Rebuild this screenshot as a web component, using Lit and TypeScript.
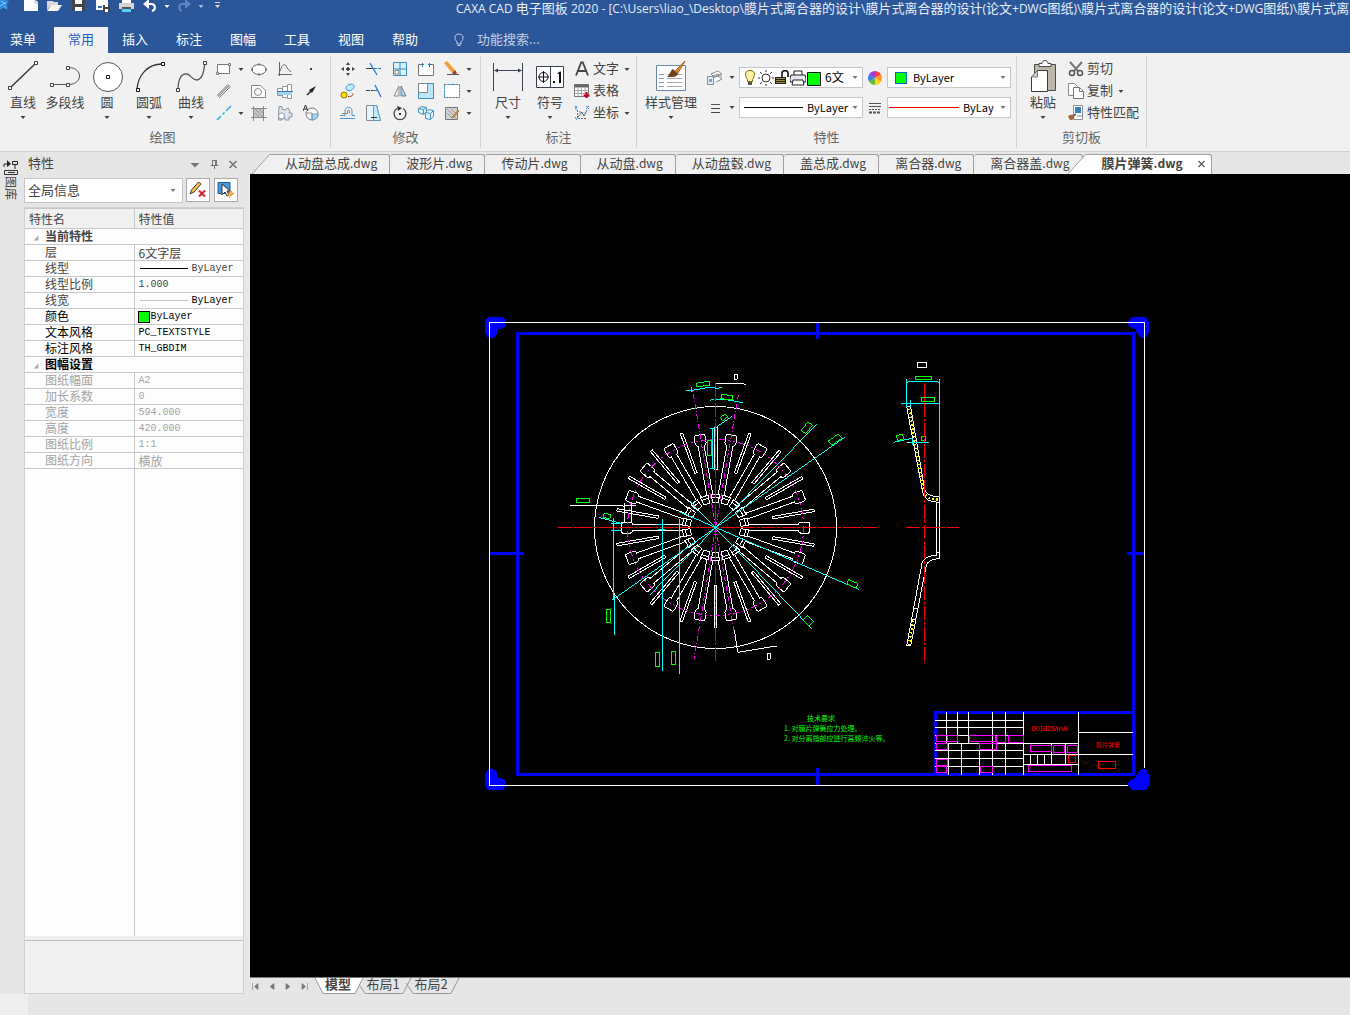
import { LitElement, html, svg, css, nothing, TemplateResult } from "lit";
import { customElement, property } from "lit/decorators.js";
import { classMap } from "lit/directives/class-map.js";

const base = css`
  :host {
    display: block;
    font-family: "Noto Sans CJK SC", sans-serif;
    font-size: 13px;
    line-height: 16px;
    color: #444;
  }
  * { box-sizing: border-box; }
  svg { display: block; flex: none; }
  button, select, input {
    font: inherit;
    color: inherit;
    border: 0;
    background: none;
    padding: 0;
    margin: 0;
    border-radius: 0;
  }
  select { appearance: none; outline: none; }
`;

const caret = (fill = "#444") => svg`<svg width="6" height="5" viewBox="0 0 6 5"><path d="M.5 1h5L3 4z" fill=${fill}/></svg>`;

/* 32 x 32 glyphs of the large ribbon buttons */
const large: Record<string, TemplateResult> = {
  line: svg`<path d="M3 28L29 3" stroke="#3b3f4c" stroke-width="1.600"/><g fill="#fff" stroke="#3b3f4c"><path d="M1.500 26.500h3v3h-3zM27.500 1.500h3v3h-3z"/></g>`,
  polyline: svg`<path d="M3 24.500H20C34 24 34 8 20 7.500h-2" fill="none" stroke="#555"/><g fill="#fff" stroke="#3b3f4c"><path d="M1.500 23.500h3v3h-3zM17.500 23.500h3v3h-3zM17.500 6.500h3v3h-3z"/></g>`,
  circle: svg`<circle cx="17" cy="17" r="14.500" fill="#fff" stroke="#555"/><path d="M15.500 15.500h3v3h-3z" fill="#fff" stroke="#222"/>`,
  arc: svg`<path d="M4 29C5 16 14 4 29 4" fill="none" stroke="#333" stroke-width="1.300"/><g fill="#fff" stroke="#111"><path d="M3.500 28.500h3v3h-3zM28.500 2.500h3v3h-3z"/></g>`,
  curve: svg`<path d="M3 30C3 18 7 13 12 14c4 1 5 6 10 6 6-1 7-10 8-18" fill="none" stroke="#555" stroke-width="1.300"/><g fill="#fff" stroke="#3b3f4c"><path d="M1.500 28.500h3v3h-3zM28.500 1.500h3v3h-3z"/></g>`,
  dimension: svg`<path d="M1.500 3v28M30.500 3v28" stroke="#3b4250"/><path d="M3 10.500h26" stroke="#3b4250"/><path d="M2 10.500l4-2v4zM30 10.500l-4-2v4z" fill="#3b4250"/>`,
  symbol: svg`<path d="M2.500 6.500h27v21h-27zM16.500 6.500v21" fill="#fff" stroke="#3b4250"/><circle cx="9.500" cy="17" r="4.500" fill="none" stroke="#111"/><path d="M9.500 11v12M4 17h11" stroke="#111"/><path d="M19 21h2v2h-2zM23 13.500l3-2h1V23h-2V14z" fill="#111"/>`,
  style: svg`<path d="M1.500 5.500h29v25h-29z" fill="#fff" stroke="#6f87a6"/><g stroke="#7f96b5"><path d="M4 14.500h5M4 18.500h5M4 22.500h5M4 26.500h5"/><path d="M12 14.500h15M12 18.500h15M12 22.500h15M12 26.500h15" stroke="#a9a9a9"/></g><path d="M30 1l-11 11 3 3z" fill="#dd8c2c" stroke="#8e5414" stroke-width=".8"/><path d="M18 9l5 5c-2 4-6 3-11 3 3-2 3-6 6-8z" fill="#6b4321"/>`,
  paste: svg`<path d="M7.500 4.500h21v26h-21z" fill="#beb6ab" stroke="#4a4a4a"/><path d="M12 6.500v-3h3c0-4 6-4 6 0h3v3z" fill="#fff" stroke="#4a4a4a"/><path d="M4.500 17l6-6.500h10v21H4.500z" fill="#fff" stroke="#3a3a3a"/><path d="M4.500 17h6v-6" fill="#c8ccd4" stroke="#777"/>`,
};

/* 16 x 16 glyphs */
const small: Record<string, TemplateResult> = {
  rect: svg`<path d="M1.500 3.500h12v9h-12z" fill="#fff" stroke="#777"/><path d="M.5 11.500h2v2h-2zM12.500 2.500h2v2h-2z" fill="#fff" stroke="#777"/>`,
  parallel: svg`<path d="M1 12.500L12 1.500M3 15L14.500 3.500" stroke="#777"/><path d="M2 13.500L13.500 2" stroke="#555"/>`,
  ray: svg`<path d="M1 15l4-4m1.500-1.500l2-2M10 6l5-5" stroke="#29a9dd" stroke-width="1.400"/>`,
  ellipse: svg`<ellipse cx="8" cy="8.500" rx="7" ry="5" fill="#fff" stroke="#666"/><path d="M0 7.500h2v2H0zM14 7.500h2v2h-2zM7 2.500h2v2H7zM7 12.500h2v2H7z" fill="#777"/>`,
  plate: svg`<path d="M.5 2.500h9l5 5v7H.5z" fill="#fff" stroke="#888"/><circle cx="7" cy="9" r="3.500" fill="#fff" stroke="#888"/>`,
  hatch: svg`<path d="M3 3h10v10H3z" fill="#bfc5c9"/><path d="M0 3.500h16M0 12.500h16M2.500 1v15M12.500 1v15" stroke="#888"/><path d="M4 4l8 8M4 8l4 4M8 4l4 4" stroke="#999"/>`,
  axis: svg`<path d="M2.500 1v14M1 13.500h14" stroke="#666"/><path d="M3 10C6 1 9 3 10 7l4 4" fill="none" stroke="#666"/>`,
  shaft: svg`<path d="M.5 5.500h5v7h-5zM5.500 3.500h5v11h-5zM10.500 1.500h4v14h-4z" fill="#fff" stroke="#8a97a5"/><path d="M1 9h14v3H1z" fill="#9fd3ee"/><path d="M0 8.500h16" stroke="#3b76b5"/>`,
  gear: svg`<path d="M2 1.500h3V4l3 1 3-2 2 3-1 2h3v4h-3v3h-4v-2H5v2H1.500V6H2z" fill="#dfe2e6" stroke="#8a97a5"/><circle cx="4.500" cy="11" r="3" fill="#fff" stroke="#8a97a5"/>`,
  point: svg`<path d="M7 7h2v2H7z" fill="#444"/>`,
  arrow: svg`<path d="M4 12L9 7" stroke="#222" stroke-width="1.500"/><path d="M13 3L6 7l3 3z" fill="#222"/>`,
  region: svg`<circle cx="9" cy="9" r="6" fill="#fff" stroke="#6f7c8c"/><path d="M9 9h6c0 4-3 6-6 6z" fill="#9fdcf7" stroke="#4b89b5" stroke-width=".7"/><path d="M0 6L2.500 0 5 6M1 4h3" fill="none" stroke="#333"/><path d="M3 8h6v6" fill="none" stroke="#888"/>`,
  move: svg`<path d="M8 6v4M6 8h4" stroke="#333" stroke-width="1.500"/><path d="M8 1l2 3H6zM8 15l2-3H6zM1 8l3-2v4zM15 8l-3-2v4z" fill="#444"/>`,
  copy: svg`<rect x="1" y="9" width="6" height="6" rx="3" fill="#ffe100" stroke="#8a7a00"/><path d="M6 4.500C7 1 13 0 14 2.500s-3 6-6 5c-1.500 0-2-1.500-2-3z" fill="#bfe8fa" stroke="#3d9bd0"/><path d="M8 13.500c4 0 5-1 5-3" fill="none" stroke="#a03030"/>`,
  offset: svg`<path d="M0 13.500h15" stroke="#4f93c4"/><path d="M0 10.500h5V6c0-5 7-5 7 0v4.500h3" fill="none" stroke="#4f93c4"/><path d="M2 8.500h5.500V6c0-1.500 2-1.500 2 0v2.500" fill="none" stroke="#888"/>`,
  trim: svg`<path d="M0 7.500h7" stroke="#444"/><path d="M8 7.500h7" stroke="#2777c4" stroke-dasharray="3 1"/><path d="M4 2l7 12" stroke="#2777c4" stroke-width="1.300"/>`,
  extend: svg`<path d="M0 7.500h4M5 7.500h2" stroke="#444"/><path d="M7 7.500h4" stroke="#2777c4"/><path d="M9 2l6 12" stroke="#2777c4" stroke-width="1.300"/>`,
  stretch: svg`<path d="M.5.500h10l4 15H.5z" fill="#e5f5fc" stroke="#888"/><path d="M7.500.500h3l4 15h-7z" fill="#c5e9f9" stroke="#5b9fc9"/><path d="M5 12.500h6" stroke="#333"/>`,
  array: svg`<path d="M1.500 1.500h13v13h-13z" fill="#d9f1fb" stroke="#3c8cc2"/><path d="M8 1.500v13M1.500 8h13" stroke="#3c8cc2"/><path d="M3 9.500h3.500V13H3z" fill="#fff" stroke="#888"/>`,
  mirror: svg`<path d="M7 3v10H2z" fill="#eee" stroke="#888"/><path d="M9 3v10h5z" fill="#a9dcf3" stroke="#667c8c"/>`,
  rotate: svg`<path d="M5 3.500a6 6 0 1 0 6 0" fill="none" stroke="#444" stroke-width="1.300"/><path d="M5 1l5 2-4 3zM7 8h2v2H7z" fill="#333"/>`,
  break: svg`<path d="M4 3.500H.500v11h15v-11H12" fill="#fff" stroke="#777"/><path d="M4.500 2v4M11.500 2v4" stroke="#2777c4"/><path d="M3 3.500h3M10 3.500h3" stroke="#2777c4"/>`,
  scale: svg`<path d="M.5.500h15v15H.5z" fill="#bfe6f7" stroke="#3c8cc2"/><path d="M.5.500h9v9h-9z" fill="#fff" stroke="#888"/>`,
  cubes: svg`<path d="M.5 3.500l3-2 5 1v5l-3 2-5-2zM.5 3.500l5 1v5M5.500 4.500l3-2" fill="#d8f0fa" stroke="#4d93bd"/><path d="M7.500 7.500l3-3 5 1v6l-3 3-5-1zM7.500 7.500l5 1v6M12.500 8.500l3-3" fill="#d8f0fa" stroke="#4d93bd"/>`,
  erase: svg`<path d="M0 2l3-2 8 9-3 3z" fill="#efa23c"/><path d="M8 12l3-3 2 3-2 2z" fill="#a83a22"/><path d="M3 13.500h12" stroke="#555"/>`,
  box: svg`<path d="M.5 1.500h15v13h-15z" fill="#fff" stroke="#666" stroke-dasharray="2 1"/><path d="M.5 14V1.500h15" fill="none" stroke="#2aa5dc" stroke-dasharray="2 2"/>`,
  hatchEdit: svg`<path d="M1.500 2.500h12v12h-12z" fill="#d2d2d2" stroke="#777"/><path d="M3 4l9 9M3 8l5 5M7 4l5 5" stroke="#999"/><path d="M14 5l-5 6-1 2 2-1 5-6z" fill="#e9962c" stroke="#9c5c12" stroke-width=".6"/>`,
  text: svg`<path d="M2 14.500L7.200 1.500h1.600L14 14.500M4 10h8" fill="none" stroke="#444" stroke-width="1.800"/>`,
  table: svg`<path d="M.5 1.500h14v12H.5z" fill="#fff" stroke="#777"/><path d="M.5 1.500h14v3H.5z" fill="#666"/><path d="M4 4v9M7.500 4v9M11 4v9M1 7.500h13M1 10.500h13" stroke="#aaa"/><path d="M12.500 9v6M9.500 12.500h6" stroke="#c00020" stroke-width="2"/>`,
  coords: svg`<path d="M3.500 5v8.500H13" fill="none" stroke="#666" stroke-dasharray="2 1"/><path d="M4 12l4-5 2 4 3-6" fill="none" stroke="#666"/><path d="M1 1l1 2 1-2M2 3v2M12 1l3 3M15 1l-3 3M1 12l2 3M6 6v2" fill="none" stroke="#3a86c9"/>`,
  layers: svg`<path d="M4 4l7-3 4 3-8 3zM5 8l6-2 4 3-6 3M6 6l5-2 4 3" fill="#fff" stroke="#888"/><path d="M.5 6.500h6v8h-6z" fill="#e6edf5" stroke="#7890a8"/><path d="M2 9h3v3H2z" fill="#7ea2c4"/>`,
  widths: svg`<path d="M4 4.500h9" stroke="#555"/><path d="M4 8.500h9M4 12.500h9" stroke="#444"/>`,
  wheel: svg`<path d="M8 8V1a7 7 0 0 1 6 3.500z" fill="#ff3b3b"/><path d="M8 8l6-3.500a7 7 0 0 1 0 7z" fill="#ff9d1e"/><path d="M8 8l6 3.500A7 7 0 0 1 8 15z" fill="#ffd21e"/><path d="M8 8v7a7 7 0 0 1-6-3.500z" fill="#5fbf3a"/><path d="M8 8l-6 3.500a7 7 0 0 1 0-7z" fill="#3a7fe0"/><path d="M8 8L2 4.500A7 7 0 0 1 8 1z" fill="#a03be0"/>`,
  linetypes: svg`<path d="M2 3.500h12M2 6.500h12" stroke="#555"/><path d="M2 9.500h12" stroke="#555" stroke-dasharray="2 1"/><path d="M2 12.500h12" stroke="#555" stroke-width="2" stroke-dasharray="3 1"/>`,
  cut: svg`<path d="M2 1l8 9M14 1L6 10" stroke="#777" stroke-width="2"/><circle cx="4" cy="12" r="2.500" fill="none" stroke="#555" stroke-width="1.500"/><circle cx="12" cy="12" r="2.500" fill="none" stroke="#555" stroke-width="1.500"/>`,
  duplicate: svg`<path d="M.5.500h6l3 3v9h-9z" fill="#fff" stroke="#888"/><path d="M5.500 4.500h6l4 4v7h-10z" fill="#fff" stroke="#777"/><path d="M11.500 4.500v4h4" fill="none" stroke="#777"/>`,
  match: svg`<path d="M5.500.500h9v14h-9z" fill="#fff" stroke="#8a9199"/><path d="M7 2h6v6H7z" fill="#3c7fb1"/><path d="M9 11h5" stroke="#888"/><path d="M0 11c3-1 4-2 6 0 1 2-1 4-3 4S1 13 0 11z" fill="#a5613a"/><path d="M5 11l3-2" stroke="#666" stroke-width="2"/>`,
  bulb: svg`<path d="M8 .5c-6 0-5 6-2.500 9v2h5v-2C13 6.500 14 .5 8 .5z" fill="#fff3a8" stroke="#77651a"/><path d="M6 12h4v3H6z" fill="#555"/>`,
  sun: svg`<circle cx="8" cy="8" r="4" fill="#fff" stroke="#333"/><path d="M8 0v2M8 14v2M0 8h2M14 8h2M2 2l2 2M12 12l2 2M2 14l2-2M12 4l2-2" stroke="#333"/>`,
  unlock: svg`<path d="M8 7V3c0-3 6-3 6 0v4" fill="none" stroke="#111" stroke-width="1.600"/><path d="M1 7h11v7H1z" fill="#222"/><path d="M2 8.500h9M2 10.500h9M2 12.500h9" stroke="#d8b93c" stroke-width=".7"/>`,
  plot: svg`<path d="M4 5V1h8v4" fill="#fff" stroke="#222"/><path d="M1 5h14l1 3v4H0V8z" fill="#e4e7ee" stroke="#222"/><path d="M3 10h10l1 5H2z" fill="#fff" stroke="#222"/>`,
  green: svg`<path d="M1.500 2.500h13v13h-13z" fill="#0f0" stroke="#111"/>`,
};

const icon = (name: string) => svg`<svg width="16" height="16" viewBox="0 0 16 16" aria-hidden="true">${small[name]}</svg>`;

/* Toolbar glyphs run off the upper edge of the title bar */
const quick: Record<string, TemplateResult> = {
  logo: svg`<path d="M0 0h6l3 1-2 3 1 6-3-3-5 3z" fill="#2f8be0"/><path d="M1 1l5 3M0 6l5-3M4 6l2 3" stroke="#8cc7fa"/>`,
  new: svg`<path d="M1 0h11l3 2v9H1z" fill="#fff"/><path d="M12 0v3h3" fill="none" stroke="#bbb"/>`,
  open: svg`<path d="M0 1h6l1 1h4v3H4l-4 5z" fill="#d8d8d8"/><path d="M4 5h11l-4 6H0z" fill="#f7f4ec"/>`,
  save: svg`<path d="M1 0h13v11H3l-2-2z" fill="#444"/><path d="M4 0h7v4H4z" fill="#eef2f7"/><path d="M4 7h7v4H4z" fill="#fff"/>`,
  saveAs: svg`<path d="M1 0h12v10H1z" fill="#fff"/><path d="M8 5h7v7H8z" fill="#444"/><path d="M10 5h3v2h-3zM10 9h3v3h-3z" fill="#fff"/><path d="M3 7h4" stroke="#2777c4" stroke-width="2"/>`,
  print: svg`<path d="M3 0h9v3H3z" fill="#fff"/><path d="M0 3h15v6H0z" fill="#d4d4d4"/><path d="M3 7h9v2H3z" fill="#555"/><path d="M3 9h9v3H3z" fill="#57d1f3"/>`,
  undo: svg`<path d="M0 4l6-5v10z" fill="#fff"/><path d="M5 4h3c5 0 5 6 1 7" fill="none" stroke="#fff" stroke-width="2"/>`,
  redo: svg`<path d="M14 4L8-1v10z" fill="#5b84c2"/><path d="M9 4H6C1 4 1 10 5 11" fill="none" stroke="#5b84c2" stroke-width="2"/>`,
  more: svg`<path d="M4 2.500h5" stroke="#cfd8e6"/><path d="M4 5h5L6.500 8z" fill="#e8d9b8"/>`,
};

@customElement("cad-header")
export class CadHeader extends LitElement {
  static styles = [base, css`
    :host { background: #2b579a; color: #fff; }
    .title { display: flex; height: 27px; overflow: hidden; }
    .tools { display: flex; flex: none; width: 456px; }
    .tools button { height: 12px; width: 24px; }
    .tools .logo { width: 23px; }
    .tools .slim { width: 17px; }
    .tools .drop { padding: 2px 4px; width: 17px; }
    .caption { flex: 1; min-width: 0; margin: 0; font-size: 13px; line-height: 16px; font-weight: 400; white-space: nowrap; overflow: hidden; color: #e8edf5; }
    .latin { font-family: "Open Sans", sans-serif; font-size: 12px; line-height: 12px; }
    .menu { display: flex; height: 26px; }
    .tab { width: 54px; height: 26px; padding-bottom: 2px; }
    .tab.first { padding-right: 8px; }
    .tab.active { background: #f1f1f1; color: #1e62c0; }
    .search { display: flex; align-items: center; gap: 12px; margin-left: 21px; color: #c4cfe1; }
    .search input { width: 120px; outline: none; padding-bottom: 2px; }
    .search input::placeholder { color: #c4cfe1; opacity: 1; }
  `];
  render() {
    const tool = (n: string, label: string, cls = "") =>
      html`<button class=${cls} aria-label=${label}><svg width="16" height="12" viewBox="0 0 16 12">${quick[n]}</svg></button>`;
    const caption =
      "CAXA CAD 电子图板 2020 - [C:\\Users\\liao_\\Desktop\\膜片式离合器的设计\\膜片式离合器的设计(论文+DWG图纸)\\膜片式离合器的设计(论文+DWG图纸)\\膜片式离合器的设计\\膜片弹簧.dwg]";
    const runs = caption.match(/[\x20-\x7e]+|[^\x20-\x7e]+/g) ?? [];
    return html`
      <div class="title">
        <div class="tools">
          ${tool("logo", "应用", "logo")}${tool("new", "新建")}${tool("open", "打开")}${tool("save", "保存")}
          ${tool("saveAs", "另存为")}${tool("print", "打印")}${tool("undo", "撤销", "slim")}
          <button class="drop" aria-label="撤销列表">${caret("#fff")}</button>
          ${tool("redo", "恢复", "slim")}<button class="drop" aria-label="恢复列表">${caret("#a9bcdb")}</button>
          ${tool("more", "自定义")}
        </div>
        <h1 class="caption">${runs.map((r) => (/^[\x20-\x7e]/.test(r) ? html`<span class="latin">${r}</span>` : r))}</h1>
      </div>
      <nav class="menu">
        ${["菜单", "常用", "插入", "标注", "图幅", "工具", "视图", "帮助"].map((t, i) =>
          html`<button class=${classMap({ tab: true, first: i === 0, active: i === 1 })}>${t}</button>`)}
        <label class="search">
          <svg width="12" height="14" viewBox="0 0 12 14"><path d="M6 1C1 1 1 6 4 9v2h4V9c3-3 3-8-2-8zM4.500 12.500h3" fill="none" stroke="#c4cfe1"/></svg>
          <input type="text" aria-label="功能搜索" placeholder="功能搜索..." />
        </label>
      </nav>`;
  }
}

@customElement("cad-ribbon")
export class CadRibbon extends LitElement {
  static styles = [base, css`
    :host { background: #f1f1f1; border-bottom: 1px solid #d2d2d2; }
    .ribbon { display: flex; padding: 3px 0; }
    .group { border-right: 1px solid #d4d4d4; padding-top: 2px; }
    .body { display: flex; height: 70px; }
    .name { margin: 0; height: 20px; text-align: center; font-size: 13px; font-weight: 400; line-height: 18px; color: #666; }
    .big { display: flex; flex-direction: column; align-items: center; width: 42px; padding-top: 2px; }
    .big.wide { width: 60px; }
    .big .label { margin: 2px 0 5px; white-space: nowrap; }
    .grid { display: grid; grid-auto-flow: column; grid-template-rows: repeat(3, 22px); grid-auto-columns: 26px; }
    .grid.draw { grid-template-columns: 35px; }
    .cell { display: flex; align-items: center; gap: 6px; }
    .rows { display: grid; grid-template-rows: repeat(3, 22px); }
    .rows button { display: flex; align-items: center; gap: 3px; }
    .rows .txt { padding-bottom: 2px; }
    .rows .tail { margin-left: 2px; }
    .g-draw .body { padding: 0 11px 0 2px; }
    .g-draw .grid { margin-left: 4px; width: 103px; }
    .g-draw .name { padding-right: 5px; }
    .g-edit .body { padding: 0 4px 0 9px; }
    .g-edit .grid { width: 136px; }
    .g-note .body { padding: 0 6px; gap: 3px; }
    .g-note .body .big + .big { margin-left: -3px; }
    .g-props .body { padding: 0 5px 0 4px; }
    .g-clip .body { padding: 0 7px 0 5px; gap: 4px; }
    .props { display: grid; grid-template-columns: 32px 124px 24px 124px; grid-template-rows: 21px 21px; row-gap: 9px; padding: 9px 0 0 6px; }
    .props .cell.mid { justify-content: center; }
    .combo { display: flex; align-items: center; border: 1px solid #c6c6c6; background: #fff; color: #000; font-size: 11px; padding: 0 4px 0 2px; }
    .combo select { flex: 1; min-width: 0; overflow: hidden; text-overflow: clip; padding-bottom: 2px; }
    .combo .stroke { width: 59px; height: 1px; background: #000; margin: 0 4px 0 2px; flex: none; }
    .combo .stroke.red { width: 70px; background: #f00; margin: 0 4px 0 -1px; }
    .combo .chip { width: 12px; height: 12px; border: 1px solid #0a64c8; background: #0f0; margin: 0 6px 0 5px; flex: none; }
    .combo .clip { margin-right: 6px; }
    .combo .layer { font-size: 12px; margin: 0 8px 0 3px; }
  `];
  private big(name: string, label: string, drop = true, cls = "") {
    return html`<button class="big ${cls}">
      <svg width="32" height="32" viewBox="0 0 32 32">${large[name]}</svg><span class="label">${label}</span>${drop ? caret() : nothing}
    </button>`;
  }
  private cell(name: string, label: string, drop = false) {
    return html`<div class="cell"><button aria-label=${label}>${icon(name)}</button>${drop
      ? html`<button aria-label="${label}选项">${caret()}</button>` : nothing}</div>`;
  }
  private row(name: string, label: string, drop = false) {
    return html`<button>${icon(name)}<span class="txt">${label}</span>${drop ? html`<span class="tail">${caret()}</span>` : nothing}</button>`;
  }
  render() {
    return html`<div class="ribbon">
      <section class="group g-draw">
        <div class="body">
          ${this.big("line", "直线")}${this.big("polyline", "多段线", false)}${this.big("circle", "圆")}${this.big("arc", "圆弧")}${this.big("curve", "曲线")}
          <div class="grid draw">
            ${this.cell("rect", "矩形", true)}${this.cell("parallel", "平行线")}${this.cell("ray", "构造线", true)}
            ${this.cell("ellipse", "椭圆")}${this.cell("plate", "孔")}${this.cell("hatch", "剖面线")}
            ${this.cell("axis", "公式曲线")}${this.cell("shaft", "轴")}${this.cell("gear", "齿轮")}
            ${this.cell("point", "点")}${this.cell("arrow", "箭头")}${this.cell("region", "局部放大")}
          </div>
        </div>
        <h2 class="name">绘图</h2>
      </section>
      <section class="group g-edit">
        <div class="body"><div class="grid">
          ${this.cell("move", "平移")}${this.cell("copy", "平移复制")}${this.cell("offset", "等距线")}
          ${this.cell("trim", "裁剪")}${this.cell("extend", "延伸")}${this.cell("stretch", "拉伸")}
          ${this.cell("array", "阵列")}${this.cell("mirror", "镜像")}${this.cell("rotate", "旋转")}
          ${this.cell("break", "打断")}${this.cell("scale", "缩放")}${this.cell("cubes", "分解")}
          ${this.cell("erase", "删除", true)}${this.cell("box", "过渡", true)}${this.cell("hatchEdit", "编辑", true)}
        </div></div>
        <h2 class="name">修改</h2>
      </section>
      <section class="group g-note">
        <div class="body">
          ${this.big("dimension", "尺寸")}${this.big("symbol", "符号")}
          <div class="rows">${this.row("text", "文字", true)}${this.row("table", "表格")}${this.row("coords", "坐标", true)}</div>
        </div>
        <h2 class="name">标注</h2>
      </section>
      <section class="group g-props">
        <div class="body">
          ${this.big("style", "样式管理", true, "wide")}
          <div class="props">
            ${this.cell("layers", "图层", true)}
            <div class="combo">${["bulb", "sun", "unlock", "plot", "green"].map(icon)}
              <select class="layer" aria-label="图层"><option>6文字层</option></select>${caret("#777")}</div>
            <div class="cell mid">${icon("wheel")}</div>
            <div class="combo"><span class="chip"></span><select aria-label="颜色"><option>ByLayer</option></select>${caret("#777")}</div>
            ${this.cell("widths", "线宽", true)}
            <div class="combo"><span class="stroke"></span><select aria-label="线宽"><option>ByLayer</option></select>${caret("#777")}</div>
            <div class="cell mid">${icon("linetypes")}</div>
            <div class="combo"><span class="stroke red"></span><select class="clip" aria-label="线型"><option>ByLayer</option></select>${caret("#777")}</div>
          </div>
        </div>
        <h2 class="name">特性</h2>
      </section>
      <section class="group g-clip">
        <div class="body">
          ${this.big("paste", "粘贴")}
          <div class="rows">${this.row("cut", "剪切")}${this.row("duplicate", "复制", true)}${this.row("match", "特性匹配")}</div>
        </div>
        <h2 class="name">剪切板</h2>
      </section>
    </div>`;
  }
}

type Row = { k: string; v?: string; line?: string; swatch?: boolean; tone?: "dark" | "off"; head?: boolean; strong?: boolean };
const ROWS: Row[] = [
  { k: "当前特性", head: true },
  { k: "层", v: "6文字层" },
  { k: "线型", v: "ByLayer", line: "#000" },
  { k: "线型比例", v: "1.000" },
  { k: "线宽", v: "ByLayer", line: "#c4c4c4", strong: true },
  { k: "颜色", v: "ByLayer", swatch: true, tone: "dark" },
  { k: "文本风格", v: "PC_TEXTSTYLE", tone: "dark" },
  { k: "标注风格", v: "TH_GBDIM", tone: "dark" },
  { k: "图幅设置", head: true, tone: "dark" },
  { k: "图纸幅面", v: "A2", tone: "off" },
  { k: "加长系数", v: "0", tone: "off" },
  { k: "宽度", v: "594.000", tone: "off" },
  { k: "高度", v: "420.000", tone: "off" },
  { k: "图纸比例", v: "1:1", tone: "off" },
  { k: "图纸方向", v: "横放", tone: "off" },
];

@customElement("cad-properties")
export class CadProperties extends LitElement {
  static styles = [base, css`
    :host { display: flex; flex-direction: column; }
    .bar { display: flex; align-items: center; height: 26px; padding: 0 5px 2px 4px; }
    .bar h2 { flex: 1; margin: 0; padding-bottom: 2px; font-size: 13px; font-weight: 400; }
    .bar .acts { display: flex; gap: 7px; }
    .bar button { width: 12px; height: 12px; }
    .pick { display: flex; gap: 4px; height: 25px; padding-right: 6px; }
    .field { display: flex; flex: 1; align-items: center; border: 1px solid #c6c6c6; background: #fff; padding: 0 6px 0 3px; margin-right: -1px; }
    .field select { flex: 1; padding-bottom: 2px; }
    .pick button { width: 24px; height: 24px; border: 1px solid #aaa; background: #fff; display: grid; place-items: center; }
    .frame { display: flex; flex-direction: column; flex: 1; margin: 4px 0 0; border: 1px solid #d0d0d0; background: #f0f0f0; }
    .sheet { display: flex; flex-direction: column; flex: 1; background: #fdfdfd; }
    table { width: 100%; border-collapse: collapse; table-layout: fixed; font-size: 12px; }
    .c1 { width: 109px; }
    th { font-weight: 400; text-align: left; }
    thead th { height: 20px; padding: 0 4px 0; border: 1px solid #c8c8c8; border-left-width: 0; background: #f0f0f0; line-height: 16px; }
    thead th:last-child { border-right: 0; }
    tbody th, tbody td { height: 16px; padding: 0; border-bottom: 1px solid #c8c8c8; line-height: 14px; vertical-align: top; white-space: nowrap; }
    tbody th { padding-left: 20px; }
    tbody td { padding-left: 4px; border-left: 1px solid #c8c8c8; }
    .head th { font-weight: 700; padding-left: 8px; }
    .head svg { display: inline-block; margin-right: 6px; }
    .dark { color: #000; }
    .off { color: #a4a4a4; }
    .mono { font-family: "Liberation Mono", "Noto Sans CJK SC", monospace; font-size: 10px; }
    .strong { color: #000; }
    .flex { display: flex; align-items: center; height: 15px; }
    .sample { flex: none; width: 48px; height: 1px; margin: 0 4px 0 1px; }
    .swatch { width: 12px; height: 12px; border: 1px solid #000; background: #0f0; margin: 0 1px 0 -1px; }
    .rest { flex: 1; }
    .rest .rule { width: 110px; height: 100%; border-right: 1px solid #c8c8c8; }
    .hint { height: 57px; border-top: 4px solid #f0f0f0; }
    .hint .edge { border-top: 1px solid #bdbdbd; height: 100%; }
  `];
  render() {
    return html`
      <div class="bar"><h2>特性</h2><div class="acts">
        <button aria-label="菜单"><svg width="12" height="12" viewBox="0 0 12 12"><path d="M1.500 5h9L6 9.500z" fill="#777"/></svg></button>
        <button aria-label="固定"><svg width="12" height="12" viewBox="0 0 12 12"><path d="M4.500 2v5M8.500 2v5M4 2.500h5M2.500 7.500h8M6.500 8v3M7.500 2v5" stroke="#777" fill="none"/></svg></button>
        <button aria-label="关闭"><svg width="12" height="12" viewBox="0 0 12 12"><path d="M2.500 3l7 7m0-7l-7 7" stroke="#777" stroke-width="1.600"/></svg></button>
      </div></div>
      <div class="pick">
        <div class="field"><select aria-label="选择对象"><option>全局信息</option></select>${caret("#777")}</div>
        <button aria-label="清除"><svg width="18" height="18" viewBox="0 0 18 18"><path d="M1 13l1.500-4 7-8L12 3l-7 8z" fill="#f4c34e" stroke="#4c3a18"/><path d="M10 9.500l6 6m0-6l-6 6" stroke="#d2202c" stroke-width="2"/></svg></button>
        <button aria-label="选择"><svg width="18" height="18" viewBox="0 0 18 18"><path d="M1 1.500h12v11H1z" fill="#4b98dc" stroke="#1b5c9c"/><path d="M5 3v11l3-3 2 4 2-1-2-4h3z" fill="#fff" stroke="#333"/><path d="M13 10l-2 4h3l-2 3 5-5h-3l1-2z" fill="#ffb52e" stroke="#c87a00" stroke-width=".5"/></svg></button>
      </div>
      <div class="frame">
        <div class="sheet">
          <table>
            <colgroup><col class="c1" /><col /></colgroup>
            <thead><tr><th>特性名</th><th>特性值</th></tr></thead>
            <tbody>${ROWS.map((r) => r.head
              ? html`<tr class="head ${r.tone ?? ""}"><th colspan="2"><svg width="6" height="6" viewBox="0 0 6 6"><path d="M5.500.500v5h-5z" fill="#aaa"/></svg>${r.k}</th></tr>`
              : html`<tr class=${r.tone ?? ""}><th>${r.k}</th><td><div class="flex">
                  ${r.line ? html`<span class="sample" style="background:${r.line}"></span>` : nothing}
                  ${r.swatch ? html`<span class="swatch"></span>` : nothing}
                  <span class=${classMap({ mono: !/[^\x00-\x7f]/.test(r.v!), strong: !!r.strong })}>${r.v}</span></div></td></tr>`)}
            </tbody>
          </table>
          <div class="rest"><div class="rule"></div></div>
        </div>
        <div class="hint"><div class="edge"></div></div>
      </div>`;
  }
}

const steps = (start: number) => Array.from({ length: 18 }, (_, i) => start + i * 20);

@customElement("cad-drawing")
export class CadDrawing extends LitElement {
  static styles = [base, css`
    :host { background: #000; min-height: 0; overflow: hidden; }
    .sheet { width: 100%; height: 100%; }
    .shape { fill: none; shape-rendering: crispEdges; }
    .note { font-size: 7px; fill: #0f0; }
    .code { font-family: "Liberation Sans", sans-serif; font-size: 8px; fill: #f00; }
    .part { font-size: 6px; fill: #f00; }
    .w { stroke: #fff; } .c { stroke: #0ff; } .g { stroke: #0f0; } .r { stroke: #f00; } .m { stroke: #f0f; } .y { stroke: #ff0; }
    .axis { stroke-dasharray: 42 5 9 5; }
    .dots { stroke-dasharray: 15 6 3 6; }
    .ring { stroke-dasharray: 6 3 2 3 2 3; }
    .hatch { stroke-dasharray: 4 8; }
    .blue { stroke: #00f; stroke-width: 3; }
    .blob { fill: #00f; }
    .x3 { stroke-width: 3; }
  `];
  private frame() {
    const blob = "M-2-5h14l4 4v4l-3 3-5 1-1 5-4 4h-5l-3-6v-10z";
    return svg`<g class="shape">
      <path class="blue" d="M517.500 333.500H1133.500V774.500H517.500z"/>
      <path class="blue" d="M817.500 322v17M817.500 768v18M490 553.500h34M1127 553.500h17"/>
      <g class="blob">
        <path transform="translate(490 322)" d=${blob}/><path transform="translate(1144 322) scale(-1 1)" d=${blob}/>
        <path transform="translate(490 785) scale(1 -1)" d=${blob}/><path transform="translate(1144 785) scale(-1 -1)" d=${blob}/>
      </g>
      <path class="w" d="M489.500 785.500V322.500H1144.500V768M489.500 785.500H1128"/></g>`;
  }
  private disc() {
    return svg`
      <g class="shape" transform="translate(715.500 527.500)">
        <g class="w">
          <circle r="121"/>
          ${steps(0).map((a) => svg`<path transform="rotate(${a})" d="M33-3H83V-4L85-5.500H93L94-4.500V4.500L93 5.500H85L83 4V3H33"/>`)}
          ${steps(10).map((a) => svg`<g transform="rotate(${a})"><path d="M58-1H100V1.500H58z"/><path d="M25-3L33-4V4L25 3zM30-4V4"/></g>`)}
        </g>
        <circle class="m ring" r="88"/>
      </g>
      <g class="shape x3" transform="translate(560 360) scale(.333333)">
        <path class="r axis" d="M-6 502H955M467 68V910"/>
        <path class="m dots" d="M467 502L398 90M467 502L535 105M467 502L402 898M467 502L533 875"/>
        <path class="w" d="M467 71H548l9 3M523 43h9v15h-9zM533 877L650 858M523 810L533 877M622 880h9v18h-9zM30 436H185L193 440M193 430V487M214 430V487M193 436h36"/>
        <path class="c" d="M378 91H396L436 84H466M396 82V96M466 86L486 82M450 121l12-3M467 119H500l48 9M467 203L516 169M458 205V325M450 205h14M450 325h14"/>
        <path class="c" d="M770 193L270 704M854 232L157 720M896 688L360 456M755 806L390 424"/>
        <path class="c" d="M117 472L190 492M153 492h34M153 511h34M160 475V720M163 705V824M307 477V932M295 494h20M295 508h20M358 477V942"/>
        <path class="g" d="M409 70l38-7 2 12-38 6zM484 103l34 4-1 13-34-4zM481 172l14-10 8 9-15 11zM442 241h13v45h-13zM49 415h40v12H49zM133 460l20 4-4 12-20-4z"/>
        <path class="g" d="M723 211l21-25 14 10-21 25zM805 243l30-21 10 13-30 21zM866 658l28 13-5 14-28-13zM728 780l15-14 18 18-14 14zM139 748h13v39h-13zM286 877h13v42h-13zM334 874h13v39h-13z"/>
      </g>`;
  }
  private profile() {
    return svg`<g class="shape x3" transform="translate(880 350) scale(.333333)">
      <path class="w" d="M112 38h28v14h-28zM80 170h12L134 420q10 20 44 20V457q-45 0-50-30zM170 457V607M178 457V626M178 607h-8v9q-36 0-44 24L80 888h12L138 650q4-24 40-24M82 277h20M98 775h14M93 808h13"/>
      <path class="y hatch" stroke-width="7" d="M87 176L130 420M137 435Q145 448 178 449M86 886L100 812"/>
      <path class="c" d="M80 86V170M178 86V440M80 98l8-4h84l6 4M63 160H178M92 150v20M42 277L100 264M90 277h57M98 264v20"/>
      <path class="g" d="M106 79h49v10h-49zM124 142h40v13h-40zM49 258l18-6 4 14-18 6zM124 259h12v13h-12z"/>
      <path class="r axis" d="M133 98V942M78 532H238"/>
    </g>`;
  }
  private titleBlock() {
    return svg`<g class="shape x3" transform="translate(770 690) scale(.333333)">
      <path d="M497 253V68H1090" stroke="#00f" stroke-width="9"/>
      <path class="w" d="M530 66v94M563 66v94M596 66v94M668 66v189M706 66v189M760 66v189M925 66v189M495 91h265M495 112h265M495 136h265M495 160H925M495 181h265M495 205h265M495 229h265M536 160v95M574 160v95M629 181v74M925 127h165M760 193h330M760 223h165M781 193v30M802 193v30M823 193v30M844 160v63M886 160v63"/>
      <path class="m" d="M499 136h34v20h-34zM533 136h31v20h-31zM598 136h80v20h-80zM680 138h26v20h-26zM715 138h46v20h-46zM499 160h35v20h-35zM628 160h52v20h-52zM499 208h35v20h-35zM499 231h31v18h-31zM633 229h34v19h-34zM781 168h64v18h-64zM852 168h33v20h-33zM894 168h30v20h-30zM775 228h131v18H775z"/>
      <path class="r" d="M895 198h22v21h-22zM985 216h52v21h-52z"/>
    </g>
    <text class="code" x="1031" y="731">60Si2MnA</text>
    <text class="part" x="1096" y="747">膜片弹簧</text>
    <text class="note" x="807" y="721">技术要求</text>
    <text class="note" x="784" y="731">1. 对膜片弹簧应力处理。</text>
    <text class="note" x="784" y="741">2. 对分离指部应进行高频淬火等。</text>`;
  }
  render() {
    return html`<svg class="sheet" viewBox="250 174 1100 803" preserveAspectRatio="xMidYMid meet" role="img" aria-label="膜片弹簧">
      ${this.frame()}${this.disc()}${this.profile()}${this.titleBlock()}
    </svg>`;
  }
}

@customElement("cad-doc-tabs")
export class CadDocTabs extends LitElement {
  @property({ type: Array }) names: string[] = [];
  static styles = [base, css`
    :host { display: flex; height: 22px; padding: 2px 0 0 2px; overflow: hidden; }
    .tab { flex: none; height: 20px; padding: 0 12px 4px 16px; border: 1px solid #a0a0a0; border-width: 1px 1px 0 0; border-radius: 3px 3px 0 0; background: #f0f0f0; line-height: 15px; white-space: nowrap; }
    .ext { font-size: 12px; }
    .slant { display: flex; flex: none; }
    .slant .tab { border-radius: 0 3px 0 0; padding-left: 14px; }
    .slant.active { margin-left: -15px; font-weight: 700; }
    .slant.active .tab { background: #fff; display: flex; padding: 0 3px 4px 15px; }
    .slant.active .shut { margin: 3px 0 0 13px; width: 12px; height: 12px; }
  `];
  render() {
    const name = (n: string) => html`${n}<span class="ext">.dwg</span>`;
    const edge = (fill: string) => svg`<svg width="19" height="20" viewBox="0 0 19 20"><path d="M0 20L18 .5H19V20z" fill=${fill}/><path d="M0 20L17.500.500H19" fill="none" stroke="#a0a0a0"/></svg>`;
    const last = this.names.length - 1;
    return this.names.map((n, i) =>
      i === last
        ? html`<div class="slant active">${edge("#fff")}<div class="tab"><button>${name(n)}</button>
            <button class="shut" aria-label="关闭"><svg width="12" height="12" viewBox="0 0 12 12"><path d="M2.500 3l6 6m0-6l-6 6" stroke="#666" stroke-width="1.500"/></svg></button></div></div>`
        : i === 0
          ? html`<div class="slant">${edge("#f0f0f0")}<button class="tab">${name(n)}</button></div>`
          : html`<button class="tab">${name(n)}</button>`);
  }
}

@customElement("cad-sheet-tabs")
export class CadSheetTabs extends LitElement {
  static styles = [base, css`
    :host { display: flex; height: 17px; border-top: 1px solid #777; }
    .step { width: 16px; height: 16px; display: grid; place-items: center; }
    .steps { display: flex; width: 67px; margin-left: -2px; }
    .sheet { position: relative; width: 48px; height: 16px; line-height: 12px; padding: 0 8px 4px 0; }
    .sheet svg { position: absolute; inset: 0; width: 100%; height: 100%; overflow: visible; }
    .sheet .label { position: relative; white-space: nowrap; }
    .sheet.on { font-weight: 700; z-index: 1; padding-right: 2px; }
  `];
  render() {
    const nav = [["首页", "M4.500 5v7M10 5.500v6L6.500 8.500z"], ["上一页", "M10 5.500v6L6 8.500z"], ["下一页", "M6 5.500v6l4-3z"], ["末页", "M6 5.500v6l3.500-3zM11.500 5v7"]];
    return html`<div class="steps">${nav.map(([l, d]) => html`<button class="step" aria-label=${l}>
        <svg width="16" height="16" viewBox="0 0 16 16"><path d=${d} fill="#777" stroke="#777" stroke-width=".6"/></svg></button>`)}</div>
      ${["模型", "布局1", "布局2"].map((t, i) => html`<button class=${classMap({ sheet: true, on: i === 0 })}>
        <svg viewBox="0 0 48 16" preserveAspectRatio="none"><path d=${i ? "M-5 5L2 15.500H40L48 0" : "M0 0L8 15.500H40L48 0"} fill=${i ? "none" : "#fff"} stroke="#999"/></svg>
        <span class="label">${t}</span></button>`)}`;
  }
}

@customElement("app-root")
export class AppRoot extends LitElement {
  static styles = [base, css`
    :host { display: flex; flex-direction: column; min-height: 100vh; background: #e6e6e6; }
    .work { flex: 1; display: grid; grid-template-columns: 24px 220px minmax(0, 1fr); min-height: 0; }
    .dock { padding: 7px 2px 0 0; display: flex; flex-direction: column; align-items: center; }
    .dock button { display: flex; flex-direction: column; align-items: center; }
    .dock .word { writing-mode: vertical-rl; text-orientation: sideways; font-size: 12px; line-height: 14px; margin-top: 1px; }
    .main { display: flex; flex-direction: column; margin-left: 6px; min-width: 0; }
    .main cad-drawing { flex: 1 1 0; }
    .status { height: 21px; }
    .status .left { width: 28px; height: 100%; background: #eee; }
  `];
  private docs = ["从动盘总成", "波形片", "传动片", "从动盘", "从动盘毂", "盖总成", "离合器", "离合器盖", "膜片弹簧"];
  render() {
    return html`
      <cad-header></cad-header>
      <cad-ribbon></cad-ribbon>
      <main class="work">
        <aside class="dock"><button>
          <svg width="16" height="16" viewBox="0 0 16 16"><path d="M1 8V5h5" fill="none" stroke="#222"/><path d="M4 1l4 4-4 3z" fill="#222"/><path d="M9.500 2.500h5v3h-5zM12 5.500v4.500" fill="none" stroke="#222"/><path d="M1.500 11.500h13v4h-13zM5 13.500h7" fill="none" stroke="#333"/></svg>
          <span class="word">图库</span></button></aside>
        <cad-properties></cad-properties>
        <div class="main">
          <cad-doc-tabs .names=${this.docs}></cad-doc-tabs>
          <cad-drawing></cad-drawing>
          <cad-sheet-tabs></cad-sheet-tabs>
        </div>
      </main>
      <footer class="status"><div class="left"></div></footer>`;
  }
}
